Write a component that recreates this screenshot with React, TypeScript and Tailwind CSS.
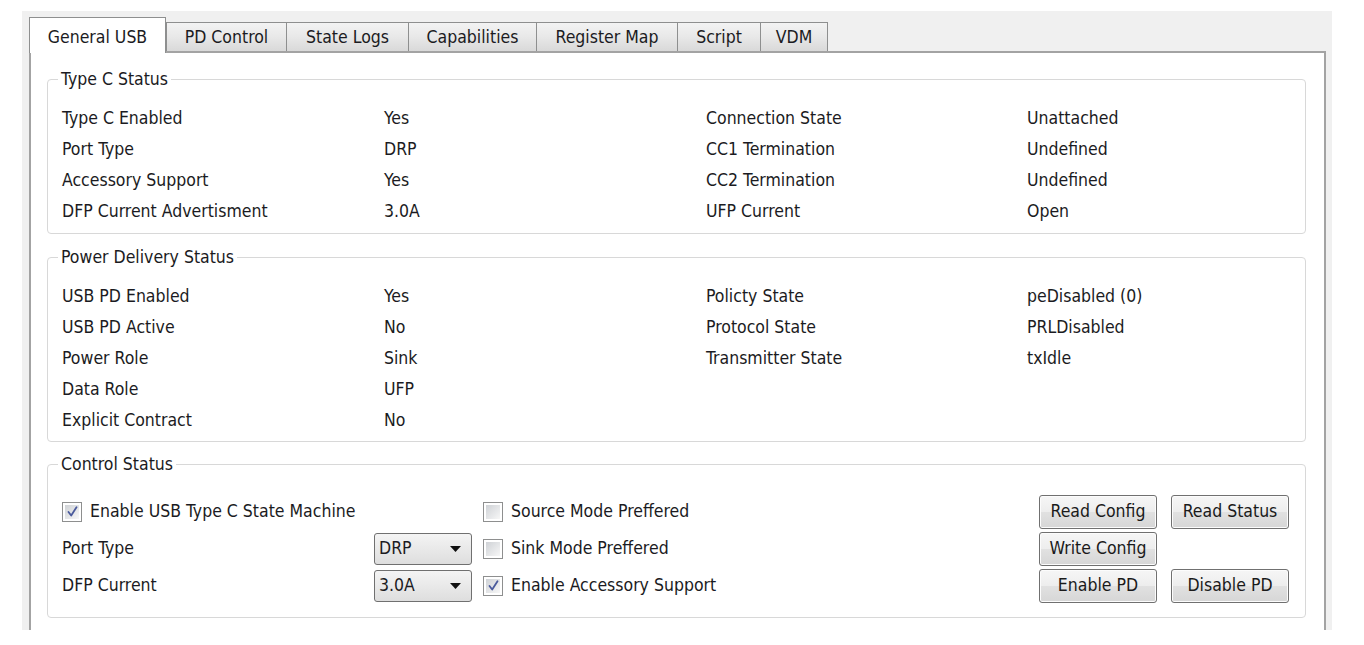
import React from 'react'

const font = "font-['DejaVu_Sans_Condensed','Liberation_Sans',sans-serif]"

const tabs = [
  { label: 'General USB', w: 'w-[137px]' },
  { label: 'PD Control', w: 'w-[120px]' },
  { label: 'State Logs', w: 'w-[122px]' },
  { label: 'Capabilities', w: 'w-[128px]' },
  { label: 'Register Map', w: 'w-[141px]' },
  { label: 'Script', w: 'w-[83px]' },
  { label: 'VDM', w: 'w-[68px]' },
]

const typeC: [string, string, string, string][] = [
  ['Type C Enabled', 'Yes', 'Connection State', 'Unattached'],
  ['Port Type', 'DRP', 'CC1 Termination', 'Undefined'],
  ['Accessory Support', 'Yes', 'CC2 Termination', 'Undefined'],
  ['DFP Current Advertisment', '3.0A', 'UFP Current', 'Open'],
]

const pd: [string, string, string, string][] = [
  ['USB PD Enabled', 'Yes', 'Policty State', 'peDisabled (0)'],
  ['USB PD Active', 'No', 'Protocol State', 'PRLDisabled'],
  ['Power Role', 'Sink', 'Transmitter State', 'txIdle'],
  ['Data Role', 'UFP', '', ''],
  ['Explicit Contract', 'No', '', ''],
]

function GroupBox({ title, className, children }: { title: string; className?: string; children: React.ReactNode }) {
  return (
    <fieldset className={`border border-[#d8d8d8] rounded-[4px] p-0 m-0 ${className ?? ''}`}>
      <legend className="ml-[10px] px-[3px] leading-[20px]">{title}</legend>
      {children}
    </fieldset>
  )
}

function StatusGrid({ rows }: { rows: [string, string, string, string][] }) {
  return (
    <div className="grid grid-cols-[322px_322px_321px_1fr] auto-rows-[31px] items-center pl-[14px] pt-[14px]">
      {rows.map((r, i) => (
        <React.Fragment key={i}>
          <span>{r[0]}</span>
          <span>{r[1]}</span>
          <span>{r[2]}</span>
          <span>{r[3]}</span>
        </React.Fragment>
      ))}
    </div>
  )
}

function CheckBox({ checked }: { checked?: boolean }) {
  return (
    <span className="inline-flex w-[20px] h-[20px] shrink-0 border border-[#8e8f8f] bg-white p-[2px]">
      <span className="flex-1 flex items-center justify-center bg-linear-to-br from-[#cfd2d6] to-[#f7f7f7]">
        {checked && (
          <svg width="13" height="13" viewBox="0 0 13 13">
            <path d="M2.5 7 L5.2 10.5 L10.5 2.2" fill="none" stroke="#4a5a9c" strokeWidth="1.8" strokeLinecap="round" strokeLinejoin="round" />
          </svg>
        )}
      </span>
    </span>
  )
}

function Combo({ value }: { value: string }) {
  return (
    <div className="flex items-center justify-between w-[98px] h-[32px] border border-[#707070] rounded-[3px] bg-linear-to-b from-[#f4f4f4] to-[#dedede] pl-[4px] pr-[10px]">
      <span>{value}</span>
      <svg width="11" height="6" viewBox="0 0 11 6">
        <path d="M0 0 H11 L5.5 6 Z" fill="#111" />
      </svg>
    </div>
  )
}

function Btn({ label }: { label: string }) {
  return (
    <button className="w-[118px] h-[34px] border border-[#707070] rounded-[3px] bg-[linear-gradient(to_bottom,#f6f6f6_0%,#ededed_50%,#e1e1e1_51%,#d6d6d6_100%)] shadow-[inset_0_0_0_1px_#fcfcfc] text-[#1a1a1a]">
      {label}
    </button>
  )
}

export default function App() {
  return (
    <div className={`w-[1364px] h-[645px] bg-white overflow-hidden pt-[11px] pl-[22px] text-[17.5px] text-[#1b1b22] ${font}`}>
      <div className="w-[1310px] h-[619px] bg-[#f0f0f0] pl-[7px] pr-[6px] pt-[6px] overflow-hidden">
        {/* tab strip */}
        <div className="flex items-end h-[34px]">
          {tabs.map((t, i) =>
            i === 0 ? (
              <div
                key={t.label}
                className={`${t.w} h-[36px] -mb-[2px] relative z-10 bg-white border-t border-l border-r border-[#8e8f8f] flex items-center justify-center pt-[3px]`}
              >
                {t.label}
              </div>
            ) : (
              <div
                key={t.label}
                className={`${t.w} h-[29px] border-t border-l ${i === tabs.length - 1 ? 'border-r' : ''} border-[#8e8f8f] bg-linear-to-b from-[#f3f3f3] via-[#e8e8e8] to-[#d9d9d9] flex items-center justify-center pt-[1px]`}
              >
                {t.label}
              </div>
            )
          )}
        </div>

        {/* tab page */}
        <div className="h-[579px] bg-white border-2 border-b-0 border-[#a3a3a3] pt-[16px] pl-[16px] pr-[18px]">
          <GroupBox title="Type C Status" className="pb-[6px]">
            <StatusGrid rows={typeC} />
          </GroupBox>

          <GroupBox title="Power Delivery Status" className="mt-[13px] pb-[5px]">
            <StatusGrid rows={pd} />
          </GroupBox>

          <GroupBox title="Control Status" className="mt-[12px]">
            <div className="flex pl-[14px] pr-[16px] pt-[19px] pb-[13px]">
              <div className="grid grid-cols-[312px_98px] auto-rows-[37px] items-center">
                <div className="col-span-2 flex items-center gap-[8px]">
                  <CheckBox checked />
                  <span>Enable USB Type C State Machine</span>
                </div>
                <span>Port Type</span>
                <Combo value="DRP" />
                <span>DFP Current</span>
                <Combo value="3.0A" />
              </div>

              <div className="ml-[11px] grid auto-rows-[37px] items-center">
                <div className="flex items-center gap-[8px]">
                  <CheckBox />
                  <span>Source Mode Preffered</span>
                </div>
                <div className="flex items-center gap-[8px]">
                  <CheckBox />
                  <span>Sink Mode Preffered</span>
                </div>
                <div className="flex items-center gap-[8px]">
                  <CheckBox checked />
                  <span>Enable Accessory Support</span>
                </div>
              </div>

              <div className="ml-auto grid grid-cols-[118px_118px] gap-x-[14px] auto-rows-[37px] items-center">
                <Btn label="Read Config" />
                <Btn label="Read Status" />
                <Btn label="Write Config" />
                <span />
                <Btn label="Enable PD" />
                <Btn label="Disable PD" />
              </div>
            </div>
          </GroupBox>
        </div>
      </div>
    </div>
  )
}
